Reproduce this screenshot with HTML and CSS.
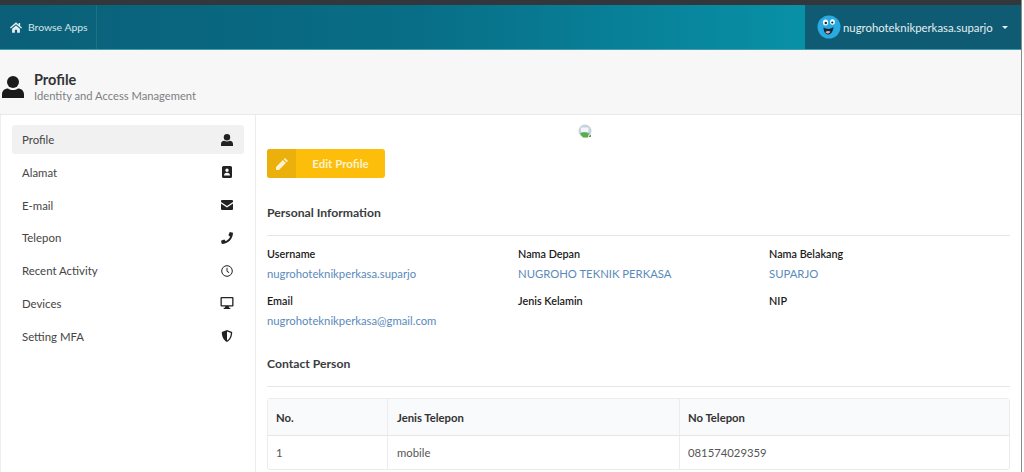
FILE: index.html
```html
<!DOCTYPE html>
<html lang="en">

<head>
  <meta charset="UTF-8" />
  <title>Profile</title>
  <link rel="stylesheet" href="styles.css">
</head>

<body>
  <div class="page">
    <div class="top-strip"></div>

    <nav class="navbar">
      <a class="browse">
        <svg class="browse-icon" viewBox="0 0 16 14"><path d="M8 0 0 7l1 1.200L8 2.500l7 5.700L16 7l-2.500-2.100V1h-2v2.200zM2.800 8.500V14h3.700v-4h3v4h3.700V8.500L8 4.200z"/></svg>
        Browse Apps
      </a>
      <div class="user-box">
        <svg class="avatar" viewBox="0 0 24 24">
          <circle cx="12" cy="12" r="11.500" fill="#29abe2"/>
          <ellipse cx="8.500" cy="7.500" rx="2.600" ry="3" fill="#fff"/>
          <ellipse cx="15.500" cy="7" rx="2.400" ry="2.800" fill="#fff"/>
          <circle cx="8.800" cy="8" r="1.200" fill="#123"/>
          <circle cx="15.300" cy="7.500" r="1.100" fill="#123"/>
          <path d="M6.500 12.500c3 2 7 2 10-.5-.3 5-3 7.500-5.500 7.500s-4.500-3-4.500-7z" fill="#0d2b3a"/>
          <path d="M8.500 17c1-1.300 3.500-1.500 5-.4-1 2.400-3.800 2.600-5 .4z" fill="#f2a0a0"/>
        </svg>
        <span class="user-name">nugrohoteknikperkasa.suparjo</span>
        <span class="caret"></span>
      </div>
    </nav>

    <header class="page-head">
      <svg class="head-icon" viewBox="0 0 22 22"><circle cx="11" cy="6" r="6"/><path d="M0 22v-3.500C0 14.500 3 12.500 6 12.500c1.500 1 3.200 1.500 5 1.500s3.500-.5 5-1.500c3 0 6 2 6 6V22z"/></svg>
      <div>
        <h1>Profile</h1>
        <p>Identity and Access Management</p>
      </div>
    </header>

    <div class="main">
      <aside class="sidebar">
        <a class="side-item active">Profile
          <svg viewBox="0 0 12 12"><circle cx="6" cy="3.200" r="3.200"/><path d="M0 12v-2c0-2 1.600-3.200 3.300-3.200.8.500 1.700.8 2.700.8s1.900-.3 2.700-.8C10.400 6.800 12 8 12 10v2z"/></svg>
        </a>
        <a class="side-item">Alamat
          <svg viewBox="0 0 12 12"><path fill-rule="evenodd" d="M2.500 0h7A1.500 1.500 0 0 1 11 1.500v9A1.500 1.500 0 0 1 9.500 12h-7A1.500 1.500 0 0 1 1 10.500v-9A1.500 1.500 0 0 1 2.500 0zM6 2.500a1.700 1.700 0 1 0 0 3.400 1.700 1.700 0 0 0 0-3.400zM3 9.500h6c0-1.600-1.100-2.800-3-2.800S3 7.900 3 9.500z"/></svg>
        </a>
        <a class="side-item">E-mail
          <svg viewBox="0 0 12 10"><path d="M1 0h10a1 1 0 0 1 1 1v1L6 6 0 2V1a1 1 0 0 1 1-1zM0 3.500 6 7.500l6-4V9a1 1 0 0 1-1 1H1a1 1 0 0 1-1-1z"/></svg>
        </a>
        <a class="side-item">Telepon
          <svg viewBox="0 0 12 12"><path d="M8.800 0 12 .8c0 6.200-5 11.200-11.200 11.200L0 8.800l3.300-1.400 1.500 1.800c1.900-.9 3.500-2.500 4.400-4.400L7.400 3.300z"/></svg>
        </a>
        <a class="side-item">Recent Activity
          <svg viewBox="0 0 12 12"><circle cx="6" cy="6" r="5.300" fill="none" stroke="#222" stroke-width="1"/><path d="M6 2.800V6.300l2.200 1.400" fill="none" stroke="#222" stroke-width="1"/></svg>
        </a>
        <a class="side-item wide">Devices
          <svg viewBox="0 0 13 12"><path fill-rule="evenodd" d="M1 0h11a1 1 0 0 1 1 1v7.500a1 1 0 0 1-1 1H8.200l.3 1.300h1.300V12H3.200v-1.200h1.300l.3-1.300H1a1 1 0 0 1-1-1V1a1 1 0 0 1 1-1zm.3 1.300v6.900h10.400V1.300z"/></svg>
        </a>
        <a class="side-item">Setting MFA
          <svg viewBox="0 0 12 12"><path fill-rule="evenodd" d="M6 0 .8 2c0 4.500 1.700 8.300 5.200 10 3.500-1.700 5.200-5.500 5.200-10zm0 1.500 3.900 1.400C9.700 6.200 8.500 9 6 10.500z"/></svg>
        </a>
      </aside>

      <section class="content">
        <div class="photo-row">
          <svg class="broken-img" viewBox="0 0 14 14">
            <circle cx="7" cy="7" r="6.500" fill="#c4d3de"/>
            <path d="M3 3.500h7.500v4.500H3z" fill="#f3f6f9"/>
            <path d="M2 9.500c3-2 6-1.500 10 .5l-2 3.500H5z" fill="#5cab4c"/>
            <path d="M10.500 10.500H14V14h-3.500z" fill="#fff"/>
            <path d="M11 12l2-1.500V13h-2z" fill="#6d8f68"/>
          </svg>
        </div>

        <a class="btn-edit">
          <span class="btn-icon">
            <svg viewBox="0 0 12 12"><path d="M9 0l3 3-1.300 1.300-3-3zM6.900 2.100l3 3L3 12H0V9z"/></svg>
          </span>
          <span class="btn-label">Edit Profile</span>
        </a>

        <h2 class="section-title">Personal Information</h2>
        <div class="info-grid">
          <div class="field"><label>Username</label><span>nugrohoteknikperkasa.suparjo</span></div>
          <div class="field"><label>Nama Depan</label><span>NUGROHO TEKNIK PERKASA</span></div>
          <div class="field"><label>Nama Belakang</label><span>SUPARJO</span></div>
          <div class="field"><label>Email</label><span>nugrohoteknikperkasa@gmail.com</span></div>
          <div class="field"><label>Jenis Kelamin</label></div>
          <div class="field"><label>NIP</label></div>
        </div>

        <h2 class="section-title contact">Contact Person</h2>
        <table class="phone-table">
          <thead>
            <tr><th class="col-no">No.</th><th class="col-type">Jenis Telepon</th><th>No Telepon</th></tr>
          </thead>
          <tbody>
            <tr><td>1</td><td>mobile</td><td>081574029359</td></tr>
          </tbody>
        </table>
      </section>
    </div>
  </div>
</body>

</html>
```

FILE: styles.css
```css
* {
  box-sizing: border-box;
}

html,
body {
  margin: 0;
  height: 472px;
  overflow: hidden;
  background: #fff;
}

body {
  font-family: Lato, "Open Sans", sans-serif;
  font-size: 12px;
  color: #3f4244;
}

.page {
  width: 1022px;
  height: 472px;
  border-right: 1px solid #8a8a8a;
  overflow: hidden;
}

.top-strip {
  height: 5px;
  background: #33363a;
}

.navbar {
  height: 45px;
  display: flex;
  justify-content: space-between;
  background: linear-gradient(90deg, #0b5f78 0%, #086d86 40%, #0890a6 78%);
  border-bottom: 1px solid #3f9fb0;
}

.browse {
  width: 97px;
  display: flex;
  align-items: center;
  gap: 6px;
  padding-left: 10px;
  color: #d5e6ea;
  font-size: 10.400px;
  border-right: 1px solid #1a7287;
}

.browse-icon {
  width: 12px;
  height: 11px;
  fill: #e3f0f3;
}

.user-box {
  width: 216px;
  display: flex;
  align-items: center;
  padding-left: 12px;
  background: #0f5b73;
  color: #e4eff2;
  font-size: 11.350px;
}

.avatar {
  width: 24px;
  height: 24px;
  margin-right: 2px;
}

.caret {
  margin-left: 9px;
  border-top: 3px solid #e4eff2;
  border-left: 3.500px solid transparent;
  border-right: 3.500px solid transparent;
}

.page-head {
  height: 65px;
  display: flex;
  align-items: center;
  gap: 10px;
  padding: 10px 0 0 2px;
  background: #f7f7f7;
  border-bottom: 1px solid #e9e9e9;
}

.head-icon {
  width: 22px;
  height: 22px;
  fill: #1b1b1b;
}

.page-head h1 {
  margin: 0;
  font-size: 14.500px;
  font-weight: 700;
  line-height: 17px;
  color: #333;
}

.page-head p {
  margin: 0;
  font-size: 11.200px;
  line-height: 15px;
  color: #7d7f82;
}

.main {
  display: flex;
  height: 357px;
}

.sidebar {
  width: 256px;
  flex: none;
  padding: 10px 11px 0 11px;
  border-left: 1px solid #eee;
  border-right: 1px solid #ececec;
}

.side-item {
  height: 29px;
  margin-bottom: 3.800px;
  display: flex;
  align-items: center;
  justify-content: space-between;
  padding: 0 11px 0 10px;
  border-radius: 3px;
  color: #444;
  font-size: 11.400px;
}

.side-item svg {
  width: 12px;
  height: 12px;
  fill: #222;
}

.side-item.wide svg {
  width: 14px;
  margin-right: -1px;
}

.side-item.active {
  background: #f1f1f1;
}

.content {
  flex: 1;
  padding: 0 11px;
}

.photo-row {
  height: 34px;
  padding: 9px 0 0 311px;
}

.broken-img {
  display: block;
  width: 14px;
  height: 14px;
}

.btn-edit {
  width: 118px;
  height: 29px;
  display: flex;
  align-items: center;
  background: #fcbd0b;
  border-radius: 3px;
  color: #fdf2cc;
  font-weight: 700;
  font-size: 11.500px;
  overflow: hidden;
}

.btn-icon {
  width: 29px;
  height: 29px;
  display: flex;
  align-items: center;
  justify-content: center;
  background: #ecb00c;
}

.btn-icon svg {
  width: 12px;
  height: 12px;
  fill: #fdf2cc;
}

.btn-label {
  flex: 1;
  text-align: center;
}

.section-title {
  margin: 0;
  height: 58px;
  padding-top: 26px;
  font-size: 12.200px;
  line-height: 18px;
  font-weight: 700;
  color: #3a3c3e;
  border-bottom: 1px solid #e6e6e6;
}

.info-grid {
  display: grid;
  grid-template-columns: 251px 251px 1fr;
  padding-top: 9px;
}

.field {
  height: 47px;
}

.field label {
  display: block;
  height: 20px;
  line-height: 18px;
  color: #1a1a1a;
  font-size: 10.800px;
  font-weight: 600;
}

.field span {
  display: block;
  line-height: 18px;
  color: #5a8abb;
  font-size: 11.300px;
}

.section-title.contact {
  height: 49px;
  margin-top: -1px;
  padding-top: 17px;
}

.phone-table {
  width: 743px;
  margin-top: 11px;
  border-collapse: separate;
  border-spacing: 0;
  border: 1px solid #ececec;
  border-radius: 3px;
  font-size: 11.300px;
}

.phone-table th,
.phone-table td {
  text-align: left;
  padding: 0 8px;
  border-left: 1px solid #ececec;
}

.phone-table th:first-child,
.phone-table td:first-child {
  border-left: 0;
}

.phone-table th:nth-child(2),
.phone-table td:nth-child(2) {
  padding-left: 9px;
}

.phone-table th {
  height: 37px;
  background: #f9fafb;
  color: #333;
  font-weight: 700;
  border-bottom: 1px solid #e6e6e6;
}

.phone-table td {
  height: 33px;
  color: #555;
}

.col-no {
  width: 119px;
}

.col-type {
  width: 292px;
}
```
